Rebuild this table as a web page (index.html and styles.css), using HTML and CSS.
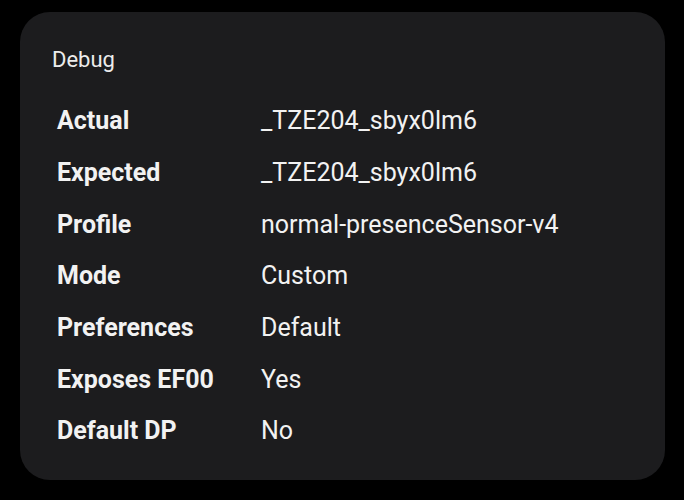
FILE: index.html
```html
<!DOCTYPE html>
<html>
<head>
<meta charset="utf-8">
<link rel="stylesheet" href="styles.css">
</head>
<body>
<div class="card">
  <div class="title">Debug</div>
  <div class="rows">
    <div class="row"><span class="label">Actual</span><span class="value">_TZE204_sbyx0lm6</span></div>
    <div class="row"><span class="label">Expected</span><span class="value">_TZE204_sbyx0lm6</span></div>
    <div class="row"><span class="label">Profile</span><span class="value">normal-presenceSensor-v4</span></div>
    <div class="row"><span class="label">Mode</span><span class="value">Custom</span></div>
    <div class="row"><span class="label">Preferences</span><span class="value">Default</span></div>
    <div class="row"><span class="label">Exposes EF00</span><span class="value">Yes</span></div>
    <div class="row"><span class="label">Default DP</span><span class="value">No</span></div>
  </div>
</div>
</body>
</html>
```
FILE: styles.css
```css
html, body {
  margin: 0;
  padding: 0;
  background: #000;
  width: 684px;
  height: 500px;
  overflow: hidden;
}
body {
  font-family: Roboto, "Noto Sans", sans-serif;
  color: #f2f2f2;
  padding: 12px 19px 0 20px;
  box-sizing: border-box;
}
.card {
  background: #1c1c1e;
  border-radius: 30px;
  height: 468px;
  box-sizing: border-box;
  padding: 34px 0 0 32px;
}
.title {
  font-size: 22px;
  line-height: 28px;
  color: #ececec;
}
.rows {
  margin-top: 21px;
  padding-left: 5px;
  display: flex;
  flex-direction: column;
}
.row {
  display: grid;
  grid-template-columns: 204px 1fr;
  height: 51.7px;
  align-items: center;
  font-size: 25px;
}
.label {
  font-weight: 700;
}
.value {
  font-weight: 400;
}
```
